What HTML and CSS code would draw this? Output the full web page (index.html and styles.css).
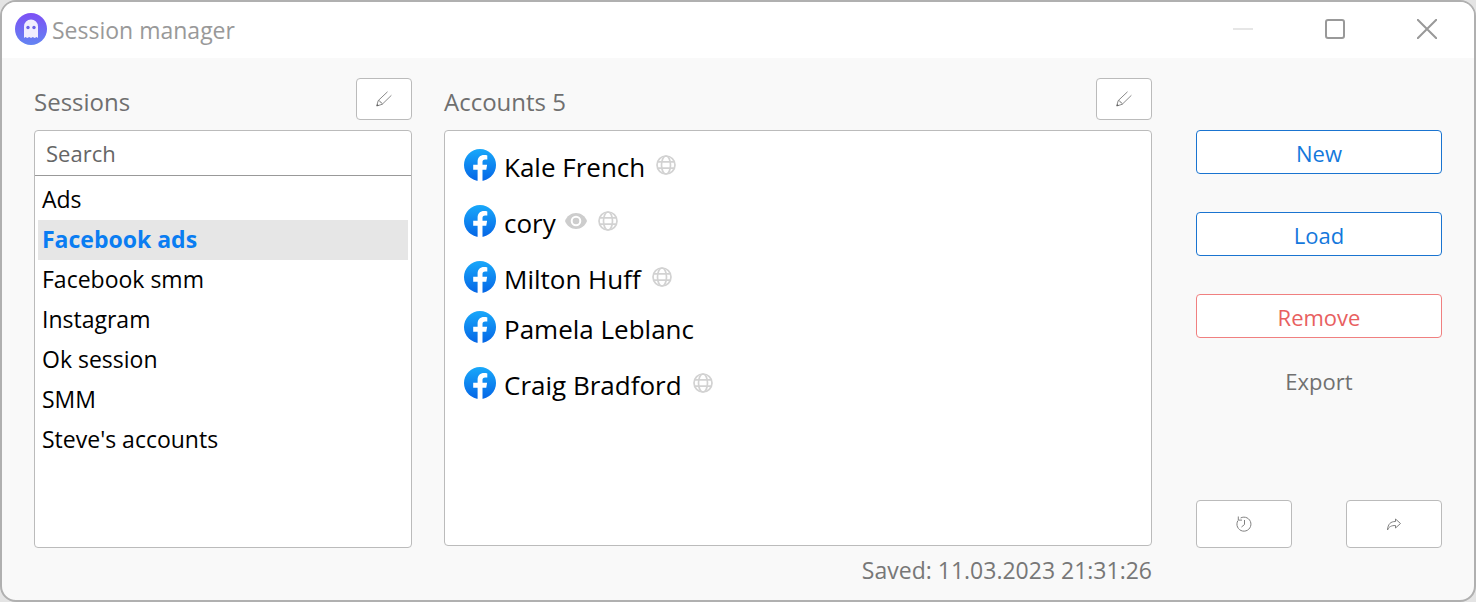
FILE: index.html
```html
<!DOCTYPE html>
<html lang="en">
<head>
    <meta charset="UTF-8">
    <meta name="viewport" content="width=device-width, initial-scale=1.0">
    <title>Session manager</title>
    <link rel="stylesheet" href="styles.css">
</head>
<body>
    <!-- shared icons -->
    <svg class="sprite" aria-hidden="true">
        <linearGradient id="fbGradient" x1="0" y1="0" x2="0" y2="1">
            <stop offset="0" stop-color="#18a8fa"/>
            <stop offset="1" stop-color="#0566e6"/>
        </linearGradient>
        <symbol id="facebook" viewBox="0 0 32 32">
            <circle cx="16" cy="16" r="16" fill="url(#fbGradient)"/>
            <path d="M13.6 32V20.800H9.200V15.800h4.400v-3.100c0-4.400 2.600-6.700 6.400-6.700 1.400 0 2.700.2 3.300.4v4.200h-2.100c-2 0-2.700 1.100-2.700 2.500v2.700h4.600l-.8 5h-3.800V32a16 16 0 0 1-4.900 0z" fill="#fff"/>
        </symbol>
        <symbol id="globe" viewBox="0 0 20 20">
            <g fill="none" stroke="#d2d2d2" stroke-width="1.7">
                <circle cx="10" cy="10" r="9"/>
                <ellipse cx="10" cy="10" rx="4.5" ry="9"/>
                <path d="M2 6.8h16M2 13.2h16"/>
            </g>
        </symbol>
        <symbol id="eye" viewBox="0 0 22 16">
            <path d="M11 0C6 0 1.800 3.200 0 8c1.800 4.800 6 8 11 8s9.200-3.200 11-8c-1.800-4.800-6-8-11-8z" fill="#cdcdcd"/>
            <circle cx="11" cy="8" r="4.300" fill="none" stroke="#fff" stroke-width="2"/>
        </symbol>
        <symbol id="pencil" viewBox="0 0 16 16">
            <path d="M11.500 .8 2.200 9.600.700 15l5.500-1.700 9.200-9M2.200 9.600c1.200-.2 1.900.3 1.900 1.600 1.200-.2 2 .6 2.100 2.100" fill="none" stroke="#8a8a8a" stroke-width="1"/>
            <path d="M1.200 13 .7 15l2.100-.6z" fill="#555"/>
        </symbol>
    </svg>

    <div class="window">
        <header class="titlebar">
            <svg class="logo" viewBox="0 0 32 32" aria-hidden="true">
                <linearGradient id="logoGradient" x1="0" y1="0" x2="0" y2="1">
                    <stop offset="0" stop-color="#7d50f5"/>
                    <stop offset="1" stop-color="#6384f2"/>
                </linearGradient>
                <circle cx="16" cy="16" r="16" fill="url(#logoGradient)"/>
                <path d="M9 25V13.500a7 7 0 0 1 14 0V25l-1.400-.9-1.900.9-1.900-.9-1.800.9-1.800-.9-1.900.9-1.900-.9z" fill="#f1eefe"/>
                <circle cx="13" cy="14.500" r="1.700" fill="#6b63e8"/>
                <circle cx="19" cy="14.500" r="1.700" fill="#6b63e8"/>
            </svg>
            <h1 class="title">Session manager</h1>
            <div class="window-controls">
                <button type="button" class="control" aria-label="Minimize">
                    <svg width="20" height="20" viewBox="0 0 20 20"><path d="M0 10h20" stroke="#e6e6e6" stroke-width="2"/></svg>
                </button>
                <button type="button" class="control" aria-label="Maximize">
                    <svg width="20" height="20" viewBox="0 0 20 20"><rect x="1" y="1" width="18" height="18" rx="2" fill="none" stroke="#999" stroke-width="2"/></svg>
                </button>
                <button type="button" class="control" aria-label="Close">
                    <svg width="20" height="20" viewBox="0 0 20 20"><path d="M0 0l20 20M20 0L0 20" stroke="#999" stroke-width="2"/></svg>
                </button>
            </div>
        </header>

        <main class="content">
            <section class="sessions">
                <div class="panel-header">
                    <h2>Sessions</h2>
                    <button type="button" class="btn edit" aria-label="Edit session"><svg class="pencil"><use href="#pencil"/></svg></button>
                </div>
                <div class="box">
                    <input type="text" class="search" placeholder="Search" aria-label="Search sessions">
                    <ul class="session-list">
                        <li><button type="button">Ads</button></li>
                        <li><button type="button" class="selected">Facebook ads</button></li>
                        <li><button type="button">Facebook smm</button></li>
                        <li><button type="button">Instagram</button></li>
                        <li><button type="button">Ok session</button></li>
                        <li><button type="button">SMM</button></li>
                        <li><button type="button">Steve's accounts</button></li>
                    </ul>
                </div>
            </section>

            <section class="accounts">
                <div class="panel-header">
                    <h2>Accounts 5</h2>
                    <button type="button" class="btn edit" aria-label="Edit accounts"><svg class="pencil"><use href="#pencil"/></svg></button>
                </div>
                <ul class="box account-list">
                    <li><svg class="facebook"><use href="#facebook"/></svg><span>Kale French</span><svg class="globe"><use href="#globe"/></svg></li>
                    <li><svg class="facebook"><use href="#facebook"/></svg><span>cory</span><svg class="eye"><use href="#eye"/></svg><svg class="globe"><use href="#globe"/></svg></li>
                    <li><svg class="facebook"><use href="#facebook"/></svg><span>Milton Huff</span><svg class="globe"><use href="#globe"/></svg></li>
                    <li class="no-proxy"><svg class="facebook"><use href="#facebook"/></svg><span>Pamela Leblanc</span></li>
                    <li><svg class="facebook"><use href="#facebook"/></svg><span>Craig Bradford</span><svg class="globe"><use href="#globe"/></svg></li>
                </ul>
                <p class="saved">Saved: 11.03.2023 21:31:26</p>
            </section>

            <aside class="actions">
                <button type="button" class="btn primary">New</button>
                <button type="button" class="btn primary">Load</button>
                <button type="button" class="btn danger">Remove</button>
                <button type="button" class="export">Export</button>
                <div class="bottom-actions">
                    <button type="button" class="btn small" aria-label="History">
                        <svg width="16" height="16" viewBox="0 0 16 16" fill="none" stroke="#808080"><path d="M4.600 2A7 7 0 1 1 1.900 4.600M2.300.5v3.600H6M8.500 4v4.500L5.500 11"/></svg>
                    </button>
                    <button type="button" class="btn small" aria-label="Share">
                        <svg width="16" height="16" viewBox="0 0 16 16" fill="none" stroke="#808080"><path d="M1.500 14C2 8 4.500 5.500 9.500 5.500V3l5 4.500-5 4.500V9.500C5.500 9.500 3 10.500 1.500 14z"/></svg>
                    </button>
                </div>
            </aside>
        </main>
    </div>
</body>
</html>
```
FILE: styles.css
```css
* {
    box-sizing: border-box;
}
body {
    margin: 0;
    background-color: #e4e4e4;
    color: #000;
    font-family: "Open Sans", "Noto Sans", sans-serif;
    font-size: 23px;
}
h1, h2, p, ul {
    margin: 0;
    padding: 0;
    font-weight: normal;
}
ul {
    list-style: none;
}
button, input {
    font-family: inherit;
    font-size: 22px;
}
svg {
    display: block;
    flex-shrink: 0;
}
.sprite {
    position: absolute;
    width: 0;
    height: 0;
}

.window {
    display: flex;
    flex-direction: column;
    min-height: 100vh;
    background-color: #f9f9f9;
    border: 2px solid #b0b0b0;
    border-radius: 16px;
    overflow: hidden;
}
.titlebar {
    display: flex;
    align-items: center;
    height: 56px;
    padding: 0 37px 2px 13px;
    background-color: #fff;
}
.logo {
    width: 32px;
    height: 32px;
    margin-right: 5px;
}
.title {
    padding-top: 2px;
    color: #999;
    font-size: 23px;
    line-height: 32px;
}
.window-controls {
    display: flex;
    gap: 72px;
    margin-left: auto;
}
.control {
    padding: 0;
    border: none;
    background: none;
    cursor: pointer;
}

.content {
    display: flex;
    flex: 1;
    padding: 20px 32px 14px;
}
.sessions {
    display: flex;
    flex-direction: column;
    width: 378px;
    margin-right: 32px;
    padding-bottom: 38px;
}
.accounts {
    display: flex;
    flex: 1;
    flex-direction: column;
    margin-right: 44px;
}
.panel-header {
    display: flex;
    align-items: center;
    justify-content: space-between;
    height: 42px;
    margin-bottom: 10px;
}
h2 {
    padding-top: 6px;
    color: #6f6f6f;
    font-size: 24px;
    line-height: 32px;
}
.btn {
    display: flex;
    align-items: center;
    justify-content: center;
    padding: 0;
    background-color: #fff;
    border: 1px solid #bbb;
    border-radius: 4px;
    cursor: pointer;
}
.edit {
    width: 56px;
    height: 42px;
}
.pencil {
    width: 16px;
    height: 16px;
}
.box {
    flex: 1;
    background-color: #fff;
    border: 1px solid #bbb;
    border-radius: 4px;
}

.search {
    display: block;
    width: 100%;
    height: 45px;
    padding: 0 11px;
    background: none;
    border: none;
    border-bottom: 1px solid #999;
}
.search::placeholder {
    color: #666;
}
.session-list {
    padding: 4px 3px;
}
.session-list button {
    display: block;
    width: 100%;
    height: 40px;
    padding: 0 4px 2px;
    border: none;
    background: none;
    color: #000;
    font-size: 23px;
    line-height: 38px;
    text-align: left;
    cursor: pointer;
}
.session-list .selected {
    background-color: #e6e6e6;
    color: #0a7df2;
    font-weight: bold;
}

.account-list {
    display: flex;
    flex-direction: column;
    gap: 24px;
    padding: 18px 19px;
}
.account-list li {
    display: flex;
    align-items: center;
    height: 32px;
}
.account-list .no-proxy {
    margin-top: -6px;
}
.account-list span {
    padding: 4px 0 0 8px;
    font-size: 26px;
    line-height: 32px;
}
.facebook {
    width: 32px;
    height: 32px;
}
.globe {
    width: 20px;
    height: 20px;
    margin-left: 11px;
}
.eye {
    width: 22px;
    height: 16px;
    margin-left: 9px;
}
.saved {
    margin-top: 8px;
    color: #777;
    line-height: 32px;
    text-align: right;
}

.actions {
    display: flex;
    flex-direction: column;
    width: 246px;
    padding: 52px 0 38px;
}
.primary, .danger {
    height: 44px;
    margin-bottom: 38px;
    padding-top: 2px;
}
.primary {
    border-color: #1a74d0;
    color: #1478dc;
}
.danger {
    border-color: #f08080;
    color: #e86060;
    margin-bottom: 24px;
}
.export {
    height: 40px;
    padding: 0 0 2px;
    border: none;
    background: none;
    color: #707070;
    cursor: pointer;
}
.bottom-actions {
    display: flex;
    justify-content: space-between;
    margin-top: auto;
}
.small {
    width: 96px;
    height: 48px;
}
```
